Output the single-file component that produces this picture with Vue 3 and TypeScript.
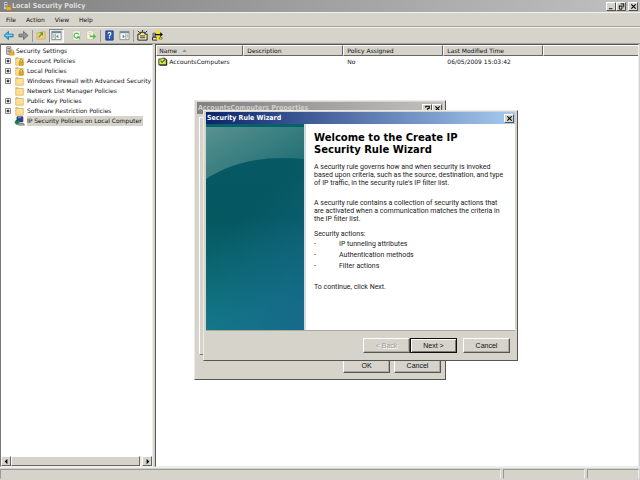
<script setup lang="ts">
interface TreeItem { label: string; expandable: boolean; icon: 'lock' | 'folder' | 'computer'; selected?: boolean }

const menus: string[] = ['File', 'Action', 'View', 'Help']
const tree: TreeItem[] = [
  { label: 'Account Policies', expandable: true, icon: 'lock' },
  { label: 'Local Policies', expandable: true, icon: 'lock' },
  { label: 'Windows Firewall with Advanced Security', expandable: true, icon: 'folder' },
  { label: 'Network List Manager Policies', expandable: false, icon: 'folder' },
  { label: 'Public Key Policies', expandable: true, icon: 'folder' },
  { label: 'Software Restriction Policies', expandable: true, icon: 'folder' },
  { label: 'IP Security Policies on Local Computer', expandable: false, icon: 'computer', selected: true },
]
const actions: string[] = ['IP tunneling attributes', 'Authentication methods', 'Filter actions']
</script>

<template>
  <div class="window">
    <header class="titlebar">
      <svg class="app-icon" viewBox="0 0 12 12" aria-hidden="true">
        <path d="M2 1h5v9H2z" fill="#e9ebee" stroke="#777b84" />
        <path d="M3 3h3M3 5h3M3 7h3" stroke="#59616f" />
        <path d="M7 7V5.500q1.500-2 3 0V7" fill="none" stroke="#b59a45" />
        <path d="M5 7h6v4H5z" fill="#f0b62c" stroke="#a87812" stroke-width=".5" />
      </svg>
      <h1>Local Security Policy</h1>
      <div class="captions">
        <button type="button" class="cap" aria-label="Minimize"><svg viewBox="0 0 8 8"><path d="M1 6.500h4" stroke="#000" /></svg></button>
        <button type="button" class="cap" aria-label="Restore"><svg viewBox="0 0 8 8"><path d="M3 1h4M6.500 1v4M1 3.500h4M1.500 3v4h3V3" fill="none" stroke="#000" /></svg></button>
        <button type="button" class="cap close" aria-label="Close"><svg viewBox="0 0 8 8"><path d="M1.500 1.500l5 5M6.500 1.500l-5 5" stroke="#000" stroke-width="1.200" /></svg></button>
      </div>
    </header>

    <nav class="menubar">
      <button v-for="m in menus" :key="m" type="button">{{ m }}</button>
    </nav>

    <div class="toolbar">
      <button type="button" aria-label="Back"><svg viewBox="0 0 12 12"><path d="M1 6l5-4.500v3h5v3H6v3z" fill="#38aee8" stroke="#1c6f9f" stroke-width=".8" /><path d="M3 5.800h7" stroke="#a5e2fa" /></svg></button>
      <button type="button" aria-label="Forward"><svg viewBox="0 0 12 12"><path d="M11 6L6 1.500v3H1v3h5v3z" fill="#909497" stroke="#606467" stroke-width=".8" /></svg></button>
      <span class="sep"></span>
      <button type="button" aria-label="Up one level"><svg viewBox="0 0 12 12"><path d="M1 3h4l1-1h4v8H1z" fill="#f0ce78" stroke="#c89e46" stroke-width=".6" /><path d="M3 8l4-5M4 3h3v3" fill="none" stroke="#4ba335" stroke-width="1.200" /></svg></button>
      <button type="button" class="pressed" aria-label="Show console tree"><svg viewBox="0 0 12 12"><path d="M1 1.500h10v9H1z" fill="#f7f8f8" stroke="#7b858e" /><path d="M1 2.500h10" stroke="#718aa3" stroke-width="2" /><path d="M4.500 4v6" stroke="#7b858e" /><path d="M8 5v4L5.500 7z" fill="#4a9a42" /><path d="M2 5.500h1M2 7.500h1" stroke="#568" /></svg></button>
      <button type="button" class="gap" aria-label="Refresh"><svg viewBox="0 0 12 12"><path d="M2 1h8v10H2z" fill="#f8f8ef" stroke="#bcbcac" stroke-width=".6" /><path d="M8.500 5A2.700 2.700 0 1 0 8 8M6.500 7.500H9V10" fill="none" stroke="#4db645" stroke-width="1.200" /></svg></button>
      <button type="button" aria-label="Export list"><svg viewBox="0 0 12 12"><path d="M1 1h7v9H1z" fill="#fffbe5" stroke="#c1b995" stroke-width=".6" /><path d="M2.500 3h4M2.500 5h3" stroke="#b6a77b" stroke-width=".6" /><path d="M4 6h4V4l3 3-3 3V8H4z" fill="#55bd4b" /></svg></button>
      <span class="sep"></span>
      <button type="button" aria-label="Help"><svg viewBox="0 0 12 12"><path d="M2 1h8v10H2z" fill="#315fb8" stroke="#183b80" /><path d="M4.500 4q0-1.500 1.500-1.500T7.500 4Q7.500 5 6 6v1M6 8v1.200" fill="none" stroke="#fff" stroke-width="1.200" /></svg></button>
      <button type="button" aria-label="Show action pane"><svg viewBox="0 0 12 12"><path d="M1 1.500h10v9H1z" fill="#f7f8f8" stroke="#8b949b" /><path d="M1 2.500h10" stroke="#718aa3" stroke-width="2" /><path d="M7.500 4v6" stroke="#8b949b" /><path d="M4 5v4l2.500-2z" fill="#4a9a42" /><path d="M9 5.500h1M9 7.500h1" stroke="#568" /></svg></button>
      <span class="sep"></span>
      <button type="button" aria-label="Create policy"><svg viewBox="0 0 12 12"><path d="M1 4.500h2.500v-2h5v2H11V11H1z" fill="#fff9c5" stroke="#111" /><path d="M3 6.500h6M3 8.500h6" stroke="#222" /><path d="M1 1l2 2M11 1L9 3M6 0v2" stroke="#222" /><path d="M4.500 3.500h3v1.500h-3z" fill="#e4d63d" /></svg></button>
      <button type="button" class="wide" aria-label="Manage filters"><svg viewBox="0 0 12 12"><path d="M1 3.500h3V7H1z" fill="#9ba2b0" stroke="#222" stroke-width=".6" /><path d="M.5 8h5v3h-5z" fill="#ddd" stroke="#222" /><path d="M5 0h3.500v11H5z" fill="#f8e016" /><path d="M3 5h8M9 3l2 2-2 2" fill="none" stroke="#111" stroke-width="1.200" /><path d="M8 8h3v2H8z" fill="#f8e016" stroke="#333" stroke-width=".5" /></svg></button>
    </div>

    <main class="panes">
      <aside class="tree-pane">
        <ul class="tree">
          <li class="root">
            <svg class="icon" viewBox="0 0 12 12"><path d="M2 1h5v9H2z" fill="#dfe3e9" stroke="#6d727c" /><path d="M3 3h3M3 5h3M3 7h3" stroke="#59616f" /><path d="M7 7V5.500q1.500-2 3 0V7" fill="none" stroke="#a08540" /><path d="M5 7h6v4H5z" fill="#f3ae20" stroke="#a87812" stroke-width=".5" /></svg>
            <span class="label">Security Settings</span>
          </li>
          <li v-for="item in tree" :key="item.label">
            <button v-if="item.expandable" type="button" class="expander" :aria-label="`Expand ${item.label}`"><svg viewBox="0 0 7 7"><path d="M.5.500h5v5h-5z" fill="#fff" stroke="#888" /><path d="M1.500 3h3M3 1.500v3" stroke="#000" /></svg></button>
            <span v-else class="expander"></span>
            <svg v-if="item.icon === 'computer'" class="icon" viewBox="0 0 12 12"><path d="M3 1h7v6H3z" fill="#2340a8" stroke="#29313d" /><path d="M4 2h4" stroke="#8fb3ef" /><path d="M4 9h7l1 2H5z" fill="#bbc" stroke="#333" stroke-width=".6" /><circle cx="3" cy="7.500" r="2.700" fill="#21a640" /><path d="M1 8l2-3 2 3M3 5v6" fill="none" stroke="#0b5721" stroke-width=".8" /></svg>
            <svg v-else class="icon" viewBox="0 0 12 12"><path d="M1.500 2h3l1 1h5v8h-9z" fill="#e9bf62" stroke="#c49b43" stroke-width=".6" /><path d="M2 4h8v6.500H2z" fill="#ffe08c" /><path d="M2.500 4.500h7" stroke="#fff0b7" /><g v-if="item.icon === 'lock'"><path d="M6.500 7V5q1.500-1.700 3 0v2" fill="none" stroke="#9b7836" /><path d="M5.500 7h5v4h-5z" fill="#f2a51b" stroke="#a87812" stroke-width=".5" /></g></svg>
            <span class="label" :class="{ selected: item.selected }">{{ item.label }}</span>
          </li>
        </ul>
        <div class="scrollbar">
          <button type="button" aria-label="Scroll left"><svg viewBox="0 0 8 8"><path d="M5 1v6L2 4z" /></svg></button>
          <span class="thumb"></span>
          <button type="button" aria-label="Scroll right"><svg viewBox="0 0 8 8"><path d="M3 1v6l3-3z" /></svg></button>
        </div>
      </aside>

      <section class="list-pane">
        <table>
          <colgroup><col class="c-name" /><col class="c-col" /><col class="c-col" /><col class="c-col" /><col /></colgroup>
          <thead>
            <tr>
              <th>Name <svg class="sort" viewBox="0 0 6 4"><path d="M0 3.500L3 .500l3 3z" fill="#8a8a84" /></svg></th>
              <th>Description</th><th>Policy Assigned</th><th>Last Modified Time</th><th></th>
            </tr>
          </thead>
          <tbody>
            <tr>
              <td class="name"><span><svg viewBox="0 0 12 10"><path d="M1 2h3l1-1h3v1h2v7H1z" fill="#e9e34b" stroke="#222" /><path d="M3 4l2 2 4-4" fill="none" stroke="#258b2d" stroke-width="1.500" /><path d="M10.500 3v6.500H2" fill="none" stroke="#111" /></svg>AccountsComputers</span></td>
              <td></td><td>No</td><td>06/05/2009 15:03:42</td><td></td>
            </tr>
          </tbody>
        </table>
      </section>
    </main>

    <footer class="status"><span class="grow"></span><span class="mid"></span><span class="end"></span></footer>

    <section class="dialog properties" aria-label="AccountsComputers Properties">
      <div class="dlg-title inactive">
        <h2>AccountsComputers Properties</h2>
        <button type="button" class="cap" aria-label="Help"><svg viewBox="0 0 8 8"><path d="M2 3V1.500h4v2L4 4.500v1M4 6v1.500" fill="none" stroke="#000" stroke-width="1.200" /></svg></button>
        <button type="button" class="cap" aria-label="Close properties"><svg viewBox="0 0 8 8"><path d="M1.500 1.500l5 5M6.500 1.500l-5 5" stroke="#000" stroke-width="1.200" /></svg></button>
      </div>
      <div class="tabpage"></div>
      <div class="prop-buttons">
        <button type="button" class="btn">OK</button>
        <button type="button" class="btn">Cancel</button>
      </div>
    </section>

    <section class="dialog wizard" role="dialog" aria-label="Security Rule Wizard">
      <div class="dlg-title active">
        <h2>Security Rule Wizard</h2>
        <button type="button" class="cap" aria-label="Close wizard"><svg viewBox="0 0 8 8"><path d="M1.500 1.500l5 5M6.500 1.500l-5 5" stroke="#000" stroke-width="1.200" /></svg></button>
      </div>
      <div class="wiz-body">
        <svg class="banner" viewBox="0 0 98 206" preserveAspectRatio="none" aria-hidden="true">
          <defs>
            <linearGradient id="sea" x1="0" y1="0" x2="0" y2="1"><stop offset="0" stop-color="#075b64" /><stop offset=".45" stop-color="#055760" /><stop offset=".75" stop-color="#0b6971" /><stop offset="1" stop-color="#128389" /></linearGradient>
            <linearGradient id="shine" x1="0" y1="0" x2="1" y2="1"><stop offset="0" stop-color="#5b9291" /><stop offset=".5" stop-color="#397e80" /><stop offset="1" stop-color="#166870" /></linearGradient>
            <linearGradient id="side" gradientUnits="userSpaceOnUse" x1="20" y1="110" x2="98" y2="190"><stop offset="0" stop-color="#16688a" stop-opacity="0" /><stop offset="1" stop-color="#16688a" stop-opacity=".9" /></linearGradient>
          </defs>
          <path d="M0 0h98v206H0z" fill="url(#sea)" />
          <path d="M0 0h98v206H0z" fill="url(#side)" />
          <path d="M0 0h98v35C58 31 27 38 0 55z" fill="url(#shine)" />
          <path d="M0 0h98v3H0z" fill="#07616a" />
        </svg>
        <div class="wiz-text">
          <h3>Welcome to the Create IP<br />Security Rule Wizard</h3>
          <p>A security rule governs how and when security is invoked<br />based upon criteria, such as the source, destination, and type<br />of IP traffic, in the security rule's IP filter list.</p>
          <p>A security rule contains a collection of security actions that<br />are activated when a communication matches the criteria in<br />the IP filter list.</p>
          <p class="lead">Security actions:</p>
          <ul>
            <li v-for="a in actions" :key="a"><span>-</span>{{ a }}</li>
          </ul>
          <p>To continue, click Next.</p>
        </div>
      </div>
      <div class="wiz-buttons">
        <button type="button" class="btn" disabled>&lt; Back</button>
        <button type="button" class="btn default">Next &gt;</button>
        <button type="button" class="btn last">Cancel</button>
      </div>
    </section>
  </div>
</template>

<style>
body { margin: 0; }
</style>

<style scoped>
* { box-sizing: border-box; }
h1, h2, h3, p, ul { margin: 0; padding: 0; }
ul { list-style: none; }
button { font: inherit; color: inherit; padding: 0; margin: 0; border: 0; background: none; }
svg { display: block; flex: none; }
.window { position: relative; display: flex; flex-direction: column; min-height: 100vh; overflow: hidden; background: #d6d3cb; color: #111; font: 6px/10px "DejaVu Sans", Verdana, sans-serif; }

.titlebar { display: flex; align-items: center; height: 12px; padding: 0 2px; background: linear-gradient(90deg, #818181, #c0c0c0); }
.app-icon { width: 10px; height: 12px; }
h1 { flex: 1; color: #deded9; font: bold 7px/12px "DejaVu Sans Condensed", sans-serif; }
.captions { display: flex; }
.cap { display: grid; place-items: center; width: 10px; height: 9px; background: #d6d3cb; border: 1px solid; border-color: #fff #555 #555 #fff; }
.cap svg { width: 7px; height: 7px; }
.captions .close { margin-left: 2px; }

.menubar { display: flex; gap: 10px; height: 15px; padding: 1px 6px 0; border-top: 1px solid #f2f0ec; border-bottom: 1px solid #a3a19b; }
.toolbar { display: flex; align-items: center; height: 17px; padding: 0 1px; border-top: 1px solid #f2f0ec; border-bottom: 1px solid #a3a19b; }
.toolbar button { display: grid; place-items: center; width: 15px; height: 14px; }
.toolbar svg { width: 11px; height: 11px; }
.toolbar .pressed { background: #eceae6; border: 1px solid; border-color: #888 #fff #fff #888; }
.toolbar .gap { margin-left: 5px; }
.toolbar .wide { width: 14px; }
.sep { width: 1px; height: 12px; margin: 0 1px; background: #999; }

.panes { display: flex; flex: 1; gap: 2px; padding-right: 1px; }
.tree-pane { display: flex; flex-direction: column; width: 24%; overflow: hidden; background: #fff; border: 1px solid; border-color: #555 #eee #eee #777; }
.tree { flex: 1; padding: 1px 0 0 4px; }
.tree li { display: flex; align-items: center; height: 10px; white-space: nowrap; }
.expander { flex: none; width: 9px; height: 7px; }
.expander svg { width: 7px; height: 7px; }
.icon { width: 11px; height: 10px; margin-right: 2px; }
.root .icon { width: 10px; margin-right: 1px; }
.label { padding-right: 1px; }
.label.selected { background: #d6d3cb; }
.scrollbar { display: flex; height: 10px; background: #ecebe6; }
.scrollbar button { display: grid; place-items: center; width: 10px; background: #d6d3cb; border: 1px solid; border-color: #fff #666 #666 #fff; }
.scrollbar svg { width: 7px; height: 7px; }
.thumb { flex: 1; margin-right: 2px; background: #d6d3cb; border: 1px solid; border-color: #fff #666 #666 #fff; }

.list-pane { flex: 1; background: #fff; border: 1px solid; border-color: #555 #eee #eee #555; }
table { width: 100%; table-layout: fixed; border-collapse: separate; border-spacing: 0; }
.c-name { width: 87px; }
.c-col { width: 100px; }
th { height: 11px; padding: 0 3px; background: #d6d3cb; border: 1px solid; border-color: #fff #666 #666 #fff; font-weight: normal; text-align: left; line-height: 9px; white-space: nowrap; }
th:first-child { padding-left: 2px; }
th:last-child { border-right: 0; }
.sort { display: inline-block; width: 5px; height: 3px; margin-left: 3px; vertical-align: 1px; }
td { height: 11px; padding: 0 4px; white-space: nowrap; }
td.name { padding: 0 2px; }
td span { display: flex; align-items: center; gap: 1px; }
td svg { width: 10px; height: 9px; }

.status { display: flex; gap: 2px; height: 13px; padding: 1px 1px 1px 0; border-top: 1px solid #eee; }
.status span { border: 1px solid; border-color: #999 #eee #d6d3cb #999; }
.grow { flex: 1; }
.mid { width: 82px; }
.end { width: 52px; }

.dialog { position: absolute; display: flex; flex-direction: column; padding: 1px 2px 2px; background: #d6d3cb; border: 1px solid; border-color: #eceae6 #555 #555 #eceae6; }
.properties { left: 194px; top: 100px; width: 252px; }
.wizard { left: 203px; top: 110px; width: 315px; }
.dlg-title { display: flex; align-items: center; height: 12px; padding: 0 1px; color: #fff; }
.dlg-title h2 { flex: 1; font: bold 7px/12px "DejaVu Sans Condensed", sans-serif; }
.inactive { background: linear-gradient(90deg, #818181, #c0c0c0); }
.inactive h2 { color: #d0cfca; }
.active { background: linear-gradient(90deg, #0b246a, #a6caf0); }
.tabpage { height: 238px; margin: 3px 2px 0; border: 1px solid; border-color: #fff #777 #777 #fff; }
.prop-buttons { display: flex; justify-content: flex-end; gap: 4px; padding: 3px 2px 4px; }
.btn { width: 47px; height: 15px; background: #d6d3cb; border: 1px solid; border-color: #fff #555 #555 #fff; box-shadow: inset -1px -1px #aaa8a1; font: 7px/12px "Liberation Sans", Arial, sans-serif; text-align: center; }
.btn:disabled { color: #a19f98; text-shadow: 1px 1px #fff; }
.btn.default { border-color: #111; box-shadow: inset 1px 1px #fff, inset -1px -1px #777; }
.btn.last { margin-left: 6px; }

.wiz-body { display: flex; background: #fff; border-bottom: 1px solid #aaa8a1; }
.banner { width: 98px; height: 206px; }
.wiz-text { flex: 1; padding: 8px 4px 0 8px; border-left: 2px solid #cfdcdd; font: 7px/8px Roboto, "Liberation Sans", sans-serif; color: #222; white-space: nowrap; }
h3 { margin-bottom: 7px; color: #000; font: bold 10px/12px "DejaVu Sans", Verdana, sans-serif; }
.wiz-text p { margin-bottom: 12px; }
.wiz-text .lead { margin: -5px 0 1px; }
.wiz-text ul { margin-bottom: 11px; }
.wiz-text li { display: flex; line-height: 11px; }
.wiz-text li span { width: 25px; }
.wiz-buttons { display: flex; justify-content: flex-end; padding: 7px 5px 5px; }
</style>
